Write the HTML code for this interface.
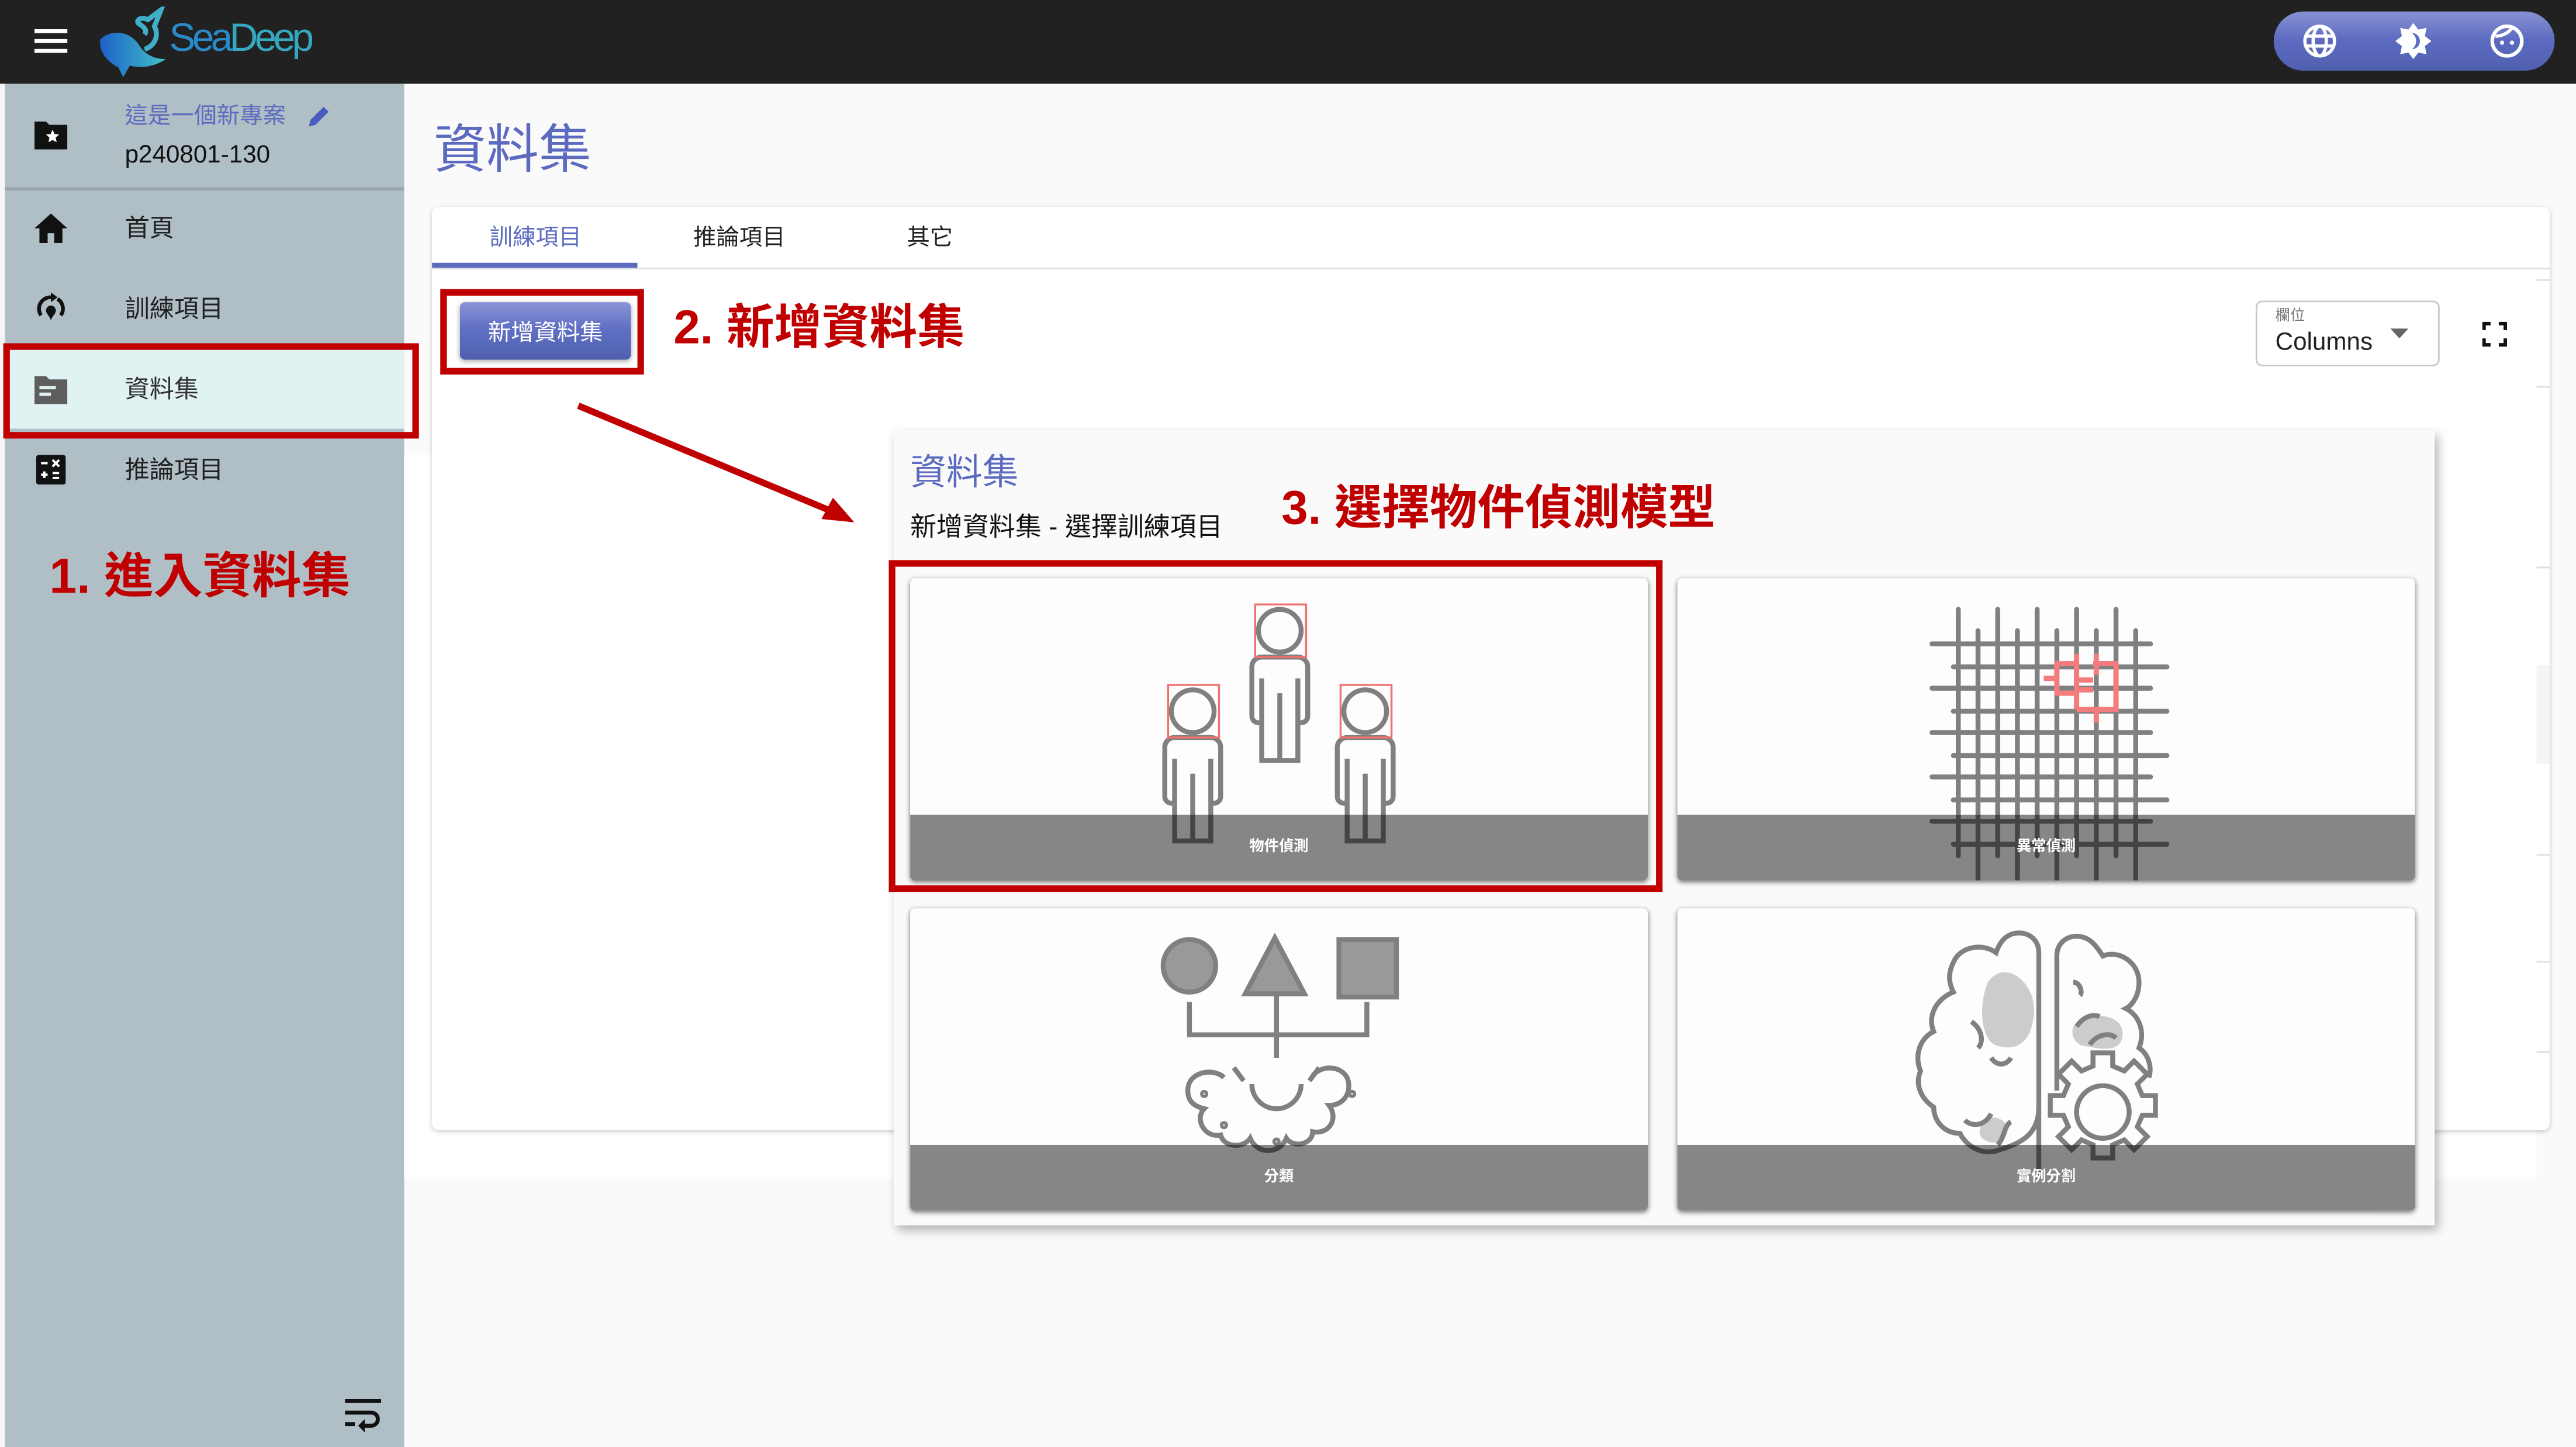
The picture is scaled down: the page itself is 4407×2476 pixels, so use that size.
<!DOCTYPE html>
<html><head><meta charset="utf-8">
<style>
*{margin:0;padding:0;box-sizing:border-box}
html,body{width:4407px;height:2475px;overflow:hidden;background:#fafafa}
#s{position:absolute;left:0;top:0;width:1568px;height:881px;transform:scale(2.81059);transform-origin:0 0;font-family:"Liberation Sans","Noto Sans CJK TC",sans-serif;background:#fafafa}
.a{position:absolute}
.t{white-space:nowrap;line-height:1}
.red{color:#c00000;font-weight:bold;font-family:"Liberation Sans","Noto Sans CJK TC",sans-serif}
.rb{position:absolute;border:4px solid #c00000}
.card{position:absolute;width:449px;height:184px;background:#fdfdfd;border-radius:3px;box-shadow:0 1px 3px rgba(0,0,0,.55);overflow:hidden}
.card svg{position:absolute;left:0;top:0}
.band{position:absolute;left:0;bottom:0;width:100%;height:40px;background:rgba(0,0,0,.47)}
.lbl{position:absolute;left:0;width:100%;bottom:16px;text-align:center;color:#fff;font-size:9px;font-weight:bold;line-height:1}
.mi{position:absolute;left:76px;font-size:15px;color:#212121}
</style></head><body><div id="s">
<div class="a" style="left:0;top:0;width:1568px;height:51px;background:#212121"></div>
<svg class="a" style="left:20px;top:16px" width="22" height="18" viewBox="0 0 22 18"><path d="M1 3h20M1 9h20M1 15h20" stroke="#fff" stroke-width="2.4"/></svg>
<svg class="a" style="left:58px;top:4px" width="50" height="44" viewBox="0 0 50 44"><defs><linearGradient id="wg" x1="0" x2="1"><stop offset="0" stop-color="#1e60c8"/><stop offset="1" stop-color="#3fc2c8"/></linearGradient></defs><path d="M3 20c6-6 18-6 24 4 4 6 10 8 16 8-6 4-14 6-22 4l-4 7-3-6C8 34 2 28 3 20z" fill="url(#wg)"/><path d="M30 26c6-2 9-8 6-14l4-10-8 6c-4-2-7 0-6 2 3 2 6 4 4 7" fill="none" stroke="#3fb0c8" stroke-width="3"/></svg>
<div class="a t" style="left:103px;top:12px;font-size:24px;letter-spacing:-2px;color:#2a8ac8;font-family:'Liberation Sans',sans-serif">Sea<span style="color:#35a8c0">Deep</span></div>
<div class="a" style="left:1384px;top:7px;width:171px;height:36px;border-radius:18px;background:linear-gradient(#8892d4,#5c6bc0 48%,#5060b0)"></div>
<svg class="a" style="left:1401px;top:14px" width="22" height="22" viewBox="0 0 22 22"><g fill="none" stroke="#fff" stroke-width="2"><circle cx="11" cy="11" r="9"/><ellipse cx="11" cy="11" rx="4" ry="9"/><path d="M2 8h18M2 14h18"/></g></svg>
<svg class="a" style="left:1457px;top:13px" width="24" height="24" viewBox="0 0 24 24"><path d="M12 1l3 4 5-1-1 5 4 3-4 3 1 5-5-1-3 4-3-4-5 1 1-5-4-3 4-3-1-5 5 1z" fill="#fff"/><path d="M11 7a5 5 0 0 1 0 10 6 6 0 0 0 0-10z" fill="#5c6bc0"/></svg>
<svg class="a" style="left:1515px;top:14px" width="22" height="22" viewBox="0 0 22 22"><circle cx="11" cy="11" r="9" fill="none" stroke="#fff" stroke-width="2.2"/><path d="M4 8c4 0 8-2 10-5" stroke="#fff" stroke-width="2" fill="none"/><circle cx="8" cy="12" r="1.3" fill="#fff"/><circle cx="14" cy="12" r="1.3" fill="#fff"/></svg>
<div class="a" style="left:0;top:51px;width:3px;height:830px;background:#f5f5f5"></div>
<div class="a" style="left:3px;top:51px;width:243px;height:830px;background:#b0bec5"></div>
<div class="a" style="left:3px;top:114px;width:243px;height:2px;background:#9aa8ae"></div>
<svg class="a" style="left:21px;top:73px" width="20" height="18" viewBox="0 0 20 18"><path d="M0 1h7l2 2h11v15H0z" fill="#111"/><path d="M11 6l1.2 2.6 2.8.3-2.1 1.9.6 2.8-2.5-1.4-2.5 1.4.6-2.8L7 8.9l2.8-.3z" fill="#fff"/></svg>
<div class="a t" style="left:76px;top:63px;font-size:14px;color:#5c6bc0">這是一個新專案</div>
<svg class="a" style="left:187px;top:64px" width="14" height="14" viewBox="0 0 14 14"><path d="M1 13l1-4 8-8 3 3-8 8z" fill="#4a5cc0"/></svg>
<div class="a t" style="left:76px;top:87px;font-size:15px;color:#111">p240801-130</div>
<div class="a" style="left:3px;top:213px;width:243px;height:48px;background:#e0f2f1"></div>
<svg class="a" style="left:21px;top:130px" width="20" height="18" viewBox="0 0 20 18"><path d="M10 0L0 9h3v9h5v-6h4v6h5V9h3z" fill="#111"/></svg>
<svg class="a" style="left:21px;top:178px" width="20" height="20" viewBox="0 0 20 20"><path d="M4 14a7 7 0 0 1 6-11h2" fill="none" stroke="#111" stroke-width="2.3"/><path d="M16 14a7 7 0 0 0-2-10" fill="none" stroke="#111" stroke-width="2.3"/><path d="M10 0l4 3-4 3z" fill="#111"/><path d="M10 8c2 0 3 2 3 3 0 2-2 3-3 6-1-3-3-4-3-6 0-1 1-3 3-3z" fill="#111"/></svg>
<svg class="a" style="left:21px;top:228px" width="20" height="18" viewBox="0 0 20 18"><path d="M0 1h7l2 2h11v15H0z" fill="#5d5d5d"/><path d="M3 8h10M3 12h7" stroke="#e0f2f1" stroke-width="2"/></svg>
<svg class="a" style="left:22px;top:277px" width="18" height="18" viewBox="0 0 18 18"><rect width="18" height="18" rx="1.5" fill="#111"/><path d="M3 5h4M10 3l4 4M14 3l-4 4M3 12h4M5 10v4M10 11h4M10 14h4" stroke="#fff" stroke-width="1.4"/></svg>
<div class="mi t" style="top:132px">首頁</div>
<div class="mi t" style="top:181px">訓練項目</div>
<div class="mi t" style="top:230px;color:#333">資料集</div>
<div class="mi t" style="top:279px">推論項目</div>
<div class="rb" style="left:2px;top:209px;width:253px;height:58px"></div>
<div class="a t red" style="left:30px;top:337px;font-size:30px">1. 進入資料集</div>
<svg class="a" style="left:208px;top:850px" width="26" height="22" viewBox="0 0 26 22"><path d="M2 3h22M2 10h16a4 4 0 0 1 0 8h-5M2 17h6" fill="none" stroke="#111" stroke-width="2.4"/><path d="M14 14l-4 4 4 4z" fill="#111"/></svg>
<div class="a" style="left:246px;top:277px;width:1298px;height:441px;background:#fff"></div>
<div class="a t" style="left:264px;top:75px;font-size:32px;color:#5c6bc0">資料集</div>
<div class="a" style="left:263px;top:126px;width:1289px;height:562px;background:#fff;border-radius:4px;box-shadow:0 1px 3px rgba(0,0,0,.2)"></div>
<div class="a" style="left:263px;top:163px;width:1289px;height:1px;background:#ddd"></div>
<div class="a" style="left:263px;top:160px;width:125px;height:3px;background:#5c6bc0"></div>
<div class="a t" style="left:298px;top:137px;font-size:14px;color:#5c6bc0">訓練項目</div>
<div class="a t" style="left:422px;top:137px;font-size:14px;color:#222">推論項目</div>
<div class="a t" style="left:552px;top:137px;font-size:14px;color:#222">其它</div>
<div class="a" style="left:280px;top:184px;width:104px;height:35px;border-radius:3px;background:linear-gradient(#8a94d6,#6070c4 45%,#5060b0);box-shadow:0 1px 3px rgba(0,0,0,.35)"></div>
<div class="a t" style="left:280px;top:195px;width:104px;text-align:center;font-size:14px;color:#fff">新增資料集</div>
<div class="rb" style="left:268px;top:176px;width:124px;height:52px"></div>
<div class="a t red" style="left:410px;top:186px;font-size:29px">2. 新增資料集</div>
<div class="a" style="left:1373px;top:183px;width:112px;height:40px;border:1px solid #c8c8c8;border-radius:4px;background:#fff"></div>
<div class="a t" style="left:1385px;top:188px;font-size:9px;color:#777">欄位</div>
<div class="a t" style="left:1385px;top:201px;font-size:15px;color:#222">Columns</div>
<svg class="a" style="left:1455px;top:200px" width="12" height="7"><path d="M0 0h11L5.5 6z" fill="#666"/></svg>
<svg class="a" style="left:1511px;top:196px" width="15" height="15" viewBox="0 0 15 15"><path d="M1 5V1h4M10 1h4v4M14 10v4h-4M5 14H1v-4" fill="none" stroke="#111" stroke-width="2.2"/></svg>
<div class="a" style="left:1544px;top:170px;width:8px;height:1px;background:#ddd"></div>
<div class="a" style="left:1544px;top:235px;width:8px;height:1px;background:#ddd"></div>
<div class="a" style="left:1544px;top:345px;width:8px;height:1px;background:#ddd"></div>
<div class="a" style="left:1544px;top:405px;width:8px;height:60px;background:#f5f5f5"></div>
<div class="a" style="left:1544px;top:520px;width:8px;height:1px;background:#ddd"></div>
<div class="a" style="left:1544px;top:585px;width:8px;height:1px;background:#ddd"></div>
<div class="a" style="left:1544px;top:640px;width:8px;height:1px;background:#ddd"></div>
<svg class="a" style="left:340px;top:240px" width="190" height="90"><path d="M12 7L168 72" stroke="#c00000" stroke-width="4"/><path d="M180 78l-20 -2 7 -13z" fill="#c00000"/></svg>
<div class="a" style="left:544px;top:262px;width:938px;height:484px;background:#fafafa;box-shadow:2px 3px 6px rgba(0,0,0,.3)"></div>
<div class="a t" style="left:554px;top:277px;font-size:22px;color:#5c6bc0">資料集</div>
<div class="a t" style="left:554px;top:314px;font-size:16px;color:#111">新增資料集 - 選擇訓練項目</div>
<div class="a t red" style="left:780px;top:296px;font-size:29px">3. 選擇物件偵測模型</div>
<div class="card" style="left:554px;top:352px">
<svg width="449" height="184" viewBox="554 352 449 184"><g fill="none" stroke="#808080" stroke-width="3">
<g id="p"><circle cx="779" cy="384" r="13"/><path d="M768 463V440h-2a4 4 0 0 1-4-4V406a6 6 0 0 1 6-6h22a6 6 0 0 1 6 6v30a4 4 0 0 1-4 4h-2v23zM768 413v27M790 413v27M779 422v41"/></g>
<use href="#p" x="-53" y="49"/><use href="#p" x="52" y="49"/></g>
<g fill="none" stroke="#f07070" stroke-width="1.2"><rect x="764" y="368" width="31" height="32"/><rect x="711" y="417" width="31" height="32"/><rect x="816" y="417" width="31" height="32"/></g></svg>
<div class="band"></div><div class="lbl">物件偵測</div></div>
<div class="card" style="left:1021px;top:352px">
<svg width="449" height="184" viewBox="1021 352 449 184"><g stroke="#808080" stroke-width="3" stroke-linecap="round">
<path d="M1176 392h133M1189 406h130M1176 419h133M1189 433h130M1176 446h133M1189 460h130M1176 473h133M1189 487h130M1176 500h133M1189 514h130"/>
<path d="M1192 371v150M1204 384v151M1216 371v150M1228 384v151M1240 371v150M1252 384v151M1264 371v150M1276 384v151M1288 371v150M1300 384v151"/></g>
<g stroke="#f47c7c" stroke-width="3.2" fill="none"><path d="M1252 404v18h12v-18zM1252 413h-8M1264 414h10M1274 404h14v28h-24M1276 398v13M1288 404v28M1264 432v-12h10M1264 432v-6M1276 432v8M1264 398v12"/></g></svg>
<div class="band"></div><div class="lbl">異常偵測</div></div>
<div class="card" style="left:554px;top:553px">
<svg width="449" height="184" viewBox="554 553 449 184"><g stroke="#808080" stroke-width="3" fill="#999">
<circle cx="724" cy="588" r="16"/><path d="M776 571l-18 34h36z"/><rect x="815" y="572" width="35" height="35"/></g>
<g fill="none" stroke="#808080" stroke-width="3"><path d="M724 610v20h108v-20M777 606v38"/>
<path d="M745 656c-6-6-22-4-22 8 0 8 6 10 10 11-6 6 0 18 10 16 2 8 14 8 18 2 4 10 18 10 22 0 4 6 16 4 16-4 10 2 16-8 10-16 6 0 12-4 12-12 0-12-16-14-22-6M751 650l6 8M803 650l-6 8M762 660a15 15 0 0 0 30 0"/>
<circle cx="733" cy="666" r="1"/><circle cx="823" cy="666" r="1"/><circle cx="745" cy="685" r="1"/><circle cx="777" cy="695" r="1"/></g></svg>
<div class="band"></div><div class="lbl">分類</div></div>
<div class="card" style="left:1021px;top:553px">
<svg width="449" height="184" viewBox="1021 553 449 184"><g fill="#ccc"><path d="M1210 598c10-15 30 0 28 20-2 20-14 22-24 18-8-4-10-24-4-38z"/><path d="M1262 625c10-10 30-8 30 4s-12 10-22 8c-6 0-10-6-8-12z"/><path d="M1208 682c6-4 14 0 14 6 0 6-8 10-14 6-4-2-4-8 0-12z"/></g>
<g fill="none" stroke="#808080" stroke-width="3"><path d="M1241 715V580c0-8-6-12-12-12-8 0-12 6-14 12-8-6-22-4-26 6-4 8-2 14 0 18-10 4-16 14-12 24-8 4-12 14-8 24-4 10 2 18 8 22 0 8 6 16 16 16 4 8 14 14 24 10 14-4 24-10 24-26"/>
<path d="M1252 664V582c0-8 6-12 12-12 8 0 12 6 16 12 10-4 22 4 22 16 0 8-4 14-8 16 8 4 12 14 8 24 6 4 8 12 6 18"/>
<path d="M1200 622c6 4 8 12 4 16M1212 644c4 6 10 4 12 0M1196 682c4 4 12 4 16-4M1216 697c4-4 4-12 8-14M1262 598c4 0 6 6 4 8M1264 625c4-6 10-8 14-6M1272 636c4-6 12-8 16-4"/>
<path d="M1274 641h12v8l7 3 6-6 8 8-6 6 3 7h8v12h-8l-3 7 6 6-8 8-6-6-7 3v8h-12v-8l-7-3-6 6-8-8 6-6-3-7h-8v-12h8l3-7-6-6 8-8 6 6 7-3z"/>
<circle cx="1280" cy="677" r="16"/></g></svg>
<div class="band"></div><div class="lbl">實例分割</div></div>
<div class="rb" style="left:541px;top:341px;width:471px;height:202px"></div>
</div></body></html>
